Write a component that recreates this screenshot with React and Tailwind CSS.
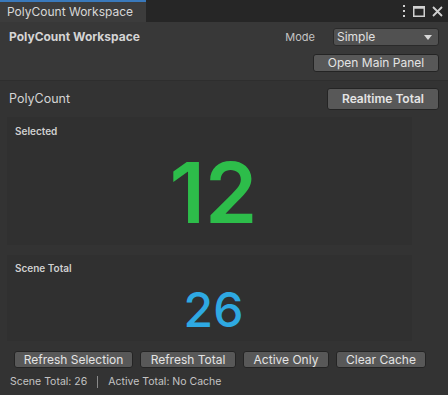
import React from "react"

function Btn({ children, className = "" }) {
  return (
    <div
      className={`flex items-center justify-center rounded-[3px] border border-[#242424] bg-[#585858] text-[12px] text-[#e4e4e4] ${className}`}
    >
      {children}
    </div>
  )
}

export default function App() {
  return (
    <div className="flex h-[395px] w-[448px] flex-col overflow-hidden bg-[#383838] font-['Inter',sans-serif] text-[#d2d2d2]">
      {/* tab bar */}
      <div className="flex h-[22px] items-end bg-[#262626]">
        <div className="flex h-[22px] w-[146px] items-center border-t-2 border-[#3a79bb] bg-[#3c3c3c] pl-[7px] text-[12px] text-[#d8d8d8]">
          PolyCount Workspace
        </div>
        <div className="flex-1" />
        <div className="flex h-[22px] items-center gap-[7px] pr-[5px] text-[#d0d0d0]">
          <svg width="4" height="12" viewBox="0 0 4 12">
            <rect x="1" y="0" width="2" height="2" fill="currentColor" />
            <rect x="1" y="5" width="2" height="2" fill="currentColor" />
            <rect x="1" y="10" width="2" height="2" fill="currentColor" />
          </svg>
          <svg width="12" height="11" viewBox="0 0 12 11">
            <rect x="0.75" y="0.75" width="10.5" height="9.5" fill="none" stroke="currentColor" strokeWidth="1.5" />
            <rect x="0.75" y="0.75" width="10.5" height="2" fill="currentColor" />
          </svg>
          <svg width="11" height="11" viewBox="0 0 11 11">
            <path d="M1 1L10 10M10 1L1 10" stroke="currentColor" strokeWidth="1.8" />
          </svg>
        </div>
      </div>

      {/* header */}
      <div className="flex flex-col px-[9px] pt-[6px]">
        <div className="flex h-[18px] items-center">
          <div className="text-[12px] font-bold text-[#d4d4d4]">PolyCount Workspace</div>
          <div className="flex-1" />
          <div className="mr-[18px] text-[11px] text-[#c4c4c4]">Mode</div>
          <div className="flex h-[18px] w-[106px] items-center justify-between rounded-[3px] border border-[#2a2a2a] bg-[#515151] pl-[3px] pr-[6px] text-[12px] text-[#e0e0e0]">
            <span>Simple</span>
            <svg width="8" height="5" viewBox="0 0 8 5">
              <path d="M0 0H8L4 5Z" fill="#d8d8d8" />
            </svg>
          </div>
        </div>
        <div className="mt-[8px] flex justify-end">
          <Btn className="h-[18px] w-[126px]">Open Main Panel</Btn>
        </div>
      </div>

      {/* main */}
      <div className="mt-[8px] flex flex-1 flex-col border-t border-[#2e2e2e] bg-[#333333]">
        <div className="flex items-center px-[9px] pt-[7px]">
          <div className="text-[12.5px] text-[#d4d4d4]">PolyCount</div>
          <div className="flex-1" />
          <Btn className="h-[22px] w-[112px] text-[12.5px] font-semibold">Realtime Total</Btn>
        </div>

        <div className="flex">
          <div className="flex w-[412px] flex-col pl-[7px]">
            <div className="mt-[7px] flex h-[128px] flex-col bg-[#303030] pl-[8px] pt-[7px]">
              <div className="text-[10px] font-semibold text-[#cfcfcf]">Selected</div>
              <div className="mt-[11px] text-center text-[84px] leading-[86px] font-semibold text-[#2dbd4a]">12</div>
            </div>
            <div className="mt-[10px] flex h-[86px] flex-col bg-[#303030] pl-[8px] pt-[6px]">
              <div className="text-[10px] font-semibold text-[#cfcfcf]">Scene Total</div>
              <div className="mt-[9px] text-center text-[48px] leading-[50px] font-medium text-[#2ea9e2]">26</div>
            </div>
          </div>
          <div className="flex-1" />
        </div>

        <div className="mt-[10px] flex gap-[7px] pl-[14px]">
          <Btn className="h-[17px] w-[119px]">Refresh Selection</Btn>
          <Btn className="h-[17px] w-[96px]">Refresh Total</Btn>
          <Btn className="h-[17px] w-[86px]">Active Only</Btn>
          <Btn className="h-[17px] w-[90px]">Clear Cache</Btn>
        </div>

        <div className="mt-[6px] flex items-center pl-[10px] text-[10.5px] text-[#c4c4c4]">
          <span>Scene Total: 26</span>
          <span className="mx-[10px] h-[12px] w-px bg-[#8a8a8a]" />
          <span>Active Total: No Cache</span>
        </div>
      </div>
    </div>
  )
}
